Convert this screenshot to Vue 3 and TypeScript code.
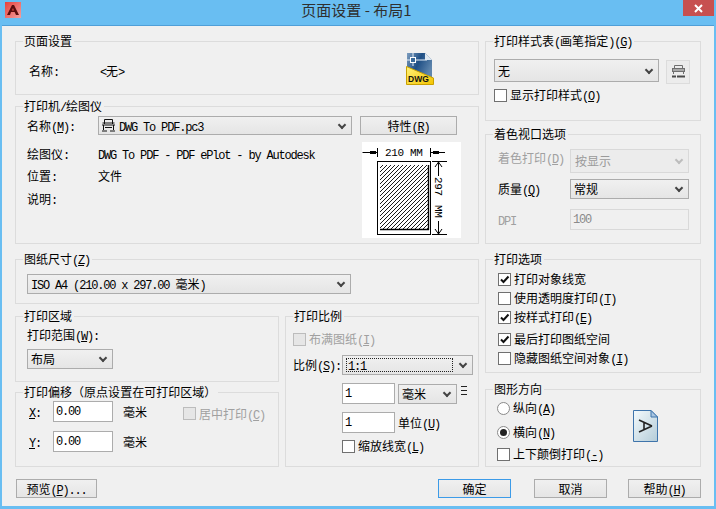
<script setup lang="ts">
import { h } from 'vue'
import type { FunctionalComponent, VNode } from 'vue'

// Renders dialog text: ASCII runs use the narrow font, "&" marks an underlined mnemonic.
const T: FunctionalComponent<{ t: string }> = (props) => {
  const out: (VNode | string)[] = []
  let run: (VNode | string)[] = []
  const flush = () => {
    if (run.length) out.push(h('span', { class: 'm' }, run))
    run = []
  }
  const chars = Array.from(props.t)
  for (let i = 0; i < chars.length; i++) {
    const c = chars[i]
    if (c === '&') {
      i++
      run.push(h('span', { class: 'u' }, chars[i]))
    } else if (c.charCodeAt(0) < 127) {
      run.push(c)
    } else {
      flush()
      out.push(c)
    }
  }
  flush()
  return h('span', { class: 't' }, out)
}
T.props = ['t']
</script>

<template>
  <div class="win">
    <header class="titlebar">
      <svg class="appicon" width="16" height="16" viewBox="0 0 16 16">
        <defs>
          <linearGradient id="appbg" x1="0" y1="0" x2="1" y2="1">
            <stop offset="0" stop-color="#e8403a" />
            <stop offset="1" stop-color="#f2a0a0" />
          </linearGradient>
        </defs>
        <rect width="16" height="16" fill="url(#appbg)" />
        <path d="M2 13 L7 3 H9 L14 13 H11 L9.6 10 H6 L5 13 Z" fill="#5c0d0d" />
        <path d="M6.8 8.5 L8 6 L9 8.5 Z" fill="#d84a44" />
      </svg>
      <span class="title">页面设置 - 布局1</span>
      <button class="close">
        <svg width="9" height="9" viewBox="0 0 9 9"><path d="M1 1 L8 8 M8 1 L1 8" stroke="#fff" stroke-width="2" /></svg>
      </button>
    </header>

    <main class="content">
      <div class="columns">
        <div class="col">
          <section class="group g-page">
            <span class="legend"><T t="页面设置" /></span>
            <div class="row">
              <span class="lab71 nudge"><T t="名称:" /></span>
              <span class="nudge"><T t="<无>" /></span>
              <svg class="dwg" width="28" height="32" viewBox="0 0 28 32">
                <defs>
                  <linearGradient id="dwgblue" x1="0" y1="0" x2="1" y2="0.5">
                    <stop offset="0" stop-color="#7f9fc0" />
                    <stop offset="0.5" stop-color="#1f4f85" />
                    <stop offset="1" stop-color="#5f86ad" />
                  </linearGradient>
                  <linearGradient id="dwgyel" x1="0" y1="0" x2="1" y2="1">
                    <stop offset="0" stop-color="#fff27a" />
                    <stop offset="1" stop-color="#f4c400" />
                  </linearGradient>
                </defs>
                <path d="M1 0 H19 L26 7 V27 H1 Z" fill="url(#dwgblue)" />
                <path d="M19 0 L26 7 H19 Z" fill="#dfe8f0" />
                <path d="M0 7 H21 M7 0 V13" stroke="#e8f0f8" stroke-width="1" />
                <rect x="4.5" y="4.5" width="5" height="5" fill="#3a6a9a" stroke="#fff" />
                <path d="M0.5 13.5 L27.5 25 V31.5 H0.5 Z" fill="url(#dwgyel)" stroke="#c9a000" />
                <text x="2" y="29" class="dwgtext">DWG</text>
              </svg>
            </div>
          </section>

          <section class="group g-printer">
            <span class="legend"><T t="打印机/绘图仪" /></span>
            <div class="row">
              <span class="lab71"><T t="名称(&M):" /></span>
              <div class="sel w254 h19 lead">
                <svg width="13" height="13" viewBox="0 0 13 13" fill="none" stroke="#111">
                  <path d="M2.5 5 V0.5 H10.5 V5" />
                  <path d="M0.5 4 H12.5 M0 6 H13" />
                  <path d="M1.5 6 V11 M11.5 6 V11 M3 8.5 H10 M0 12 H5 M8 12 H13" />
                </svg>
                <T t="DWG To PDF.pc3" />
              </div>
              <button class="btn w97"><T t="特性(&R)" /></button>
            </div>
            <div class="row top plot">
              <div class="info">
                <div class="inforow"><span class="lab71"><T t="绘图仪:" /></span><T t="DWG To PDF - PDF ePlot - by Autodesk" /></div>
                <div class="inforow"><span class="lab71"><T t="位置:" /></span><T t="文件" /></div>
                <div class="inforow extra"><span class="lab71"><T t="说明:" /></span></div>
              </div>
              <svg class="preview" width="99" height="96" viewBox="0 0 99 96">
                <defs>
                  <pattern id="hatch" width="4" height="4" patternUnits="userSpaceOnUse">
                    <path d="M-1 1 L1 -1 M0 4 L4 0 M3 5 L5 3" stroke="#000" stroke-width="0.9" />
                  </pattern>
                </defs>
                <rect width="99" height="96" fill="#fff" />
                <rect x="15.5" y="19.5" width="53" height="73" fill="none" stroke="#000" />
                <rect x="18" y="23" width="48" height="64" fill="url(#hatch)" />
                <path d="M18 87.5 H67 M66.5 23 V88" stroke="#000" stroke-width="1.4" fill="none" />
                <path d="M0.5 10.5 H16 M68 10.5 H83 M15.5 6 V15 M68.5 6 V15" stroke="#000" fill="none" />
                <rect x="8" y="9" width="6" height="3" fill="#000" />
                <rect x="71" y="9" width="6" height="3" fill="#000" />
                <text x="23" y="14" class="dim">210</text>
                <text x="48" y="14" class="dim">MM</text>
                <path d="M70 19.5 H85 M70 92.5 H85 M76.5 20 V34 M76.5 79 V92 M73 25 L76.5 20 L80 25 M73 87 L76.5 92 L80 87" stroke="#000" fill="none" />
                <text transform="translate(73 35) rotate(90)" class="dim">297</text>
                <text transform="translate(73 63) rotate(90)" class="dim">MM</text>
              </svg>
            </div>
          </section>

          <section class="group g-paper">
            <span class="legend"><T t="图纸尺寸(&Z)" /></span>
            <div class="sel w324 h20"><T t="ISO A4 (210.00 x 297.00 毫米)" /></div>
          </section>

          <div class="lower">
            <div class="lowerleft">
              <section class="group g-area">
                <span class="legend"><T t="打印区域" /></span>
                <div><T t="打印范围(&W):" /></div>
                <div class="sel w86 h20 areasel"><T t="布局" /></div>
              </section>
              <section class="group g-offset">
                <span class="legend"><T t="打印偏移（原点设置在可打印区域）" /></span>
                <div class="row offrow">
                  <span class="lab24"><T t="&X:" /></span>
                  <div class="input w60"><T t="0.00" /></div>
                  <span class="unit"><T t="毫米" /></span>
                  <label class="chk dis center">
                    <span class="box disabled"></span><T t="居中打印(&C)" />
                  </label>
                </div>
                <div class="row offrow second">
                  <span class="lab24"><T t="&Y:" /></span>
                  <div class="input w60"><T t="0.00" /></div>
                  <span class="unit"><T t="毫米" /></span>
                </div>
              </section>
            </div>

            <section class="group g-scale">
              <span class="legend"><T t="打印比例" /></span>
              <label class="chk dis"><span class="box disabled"></span><T t="布满图纸(&I)" /></label>
              <div class="row scalerow">
                <span class="lab49"><T t="比例(&S):" /></span>
                <div class="sel w131 h20 focus"><span class="dots"><T t="1:1" /></span></div>
              </div>
              <div class="row indent r8">
                <div class="input w53"><T t="1" /></div>
                <div class="sel w59 h20 ml3"><T t="毫米" /></div>
                <span class="equals"></span>
              </div>
              <div class="row indent r8">
                <div class="input w53"><T t="1" /></div>
                <span class="ml3"><T t="单位(&U)" /></span>
              </div>
              <label class="chk indent r5"><span class="box"></span><T t="缩放线宽(&L)" /></label>
            </section>
          </div>
        </div>

        <div class="col">
          <section class="group g-style">
            <span class="legend"><T t="打印样式表(画笔指定)(&G)" /></span>
            <div class="row top">
              <div class="sel w165 h23"><T t="无" /></div>
              <button class="iconbtn">
                <svg width="13" height="14" viewBox="0 0 13 14" fill="none" stroke="#6f6f6f">
                  <path d="M2.5 4 V0.5 H10.5 V4" />
                  <rect x="0.5" y="3.5" width="12" height="3" fill="#a8a8a8" />
                  <path d="M1.5 6.5 V9 M11.5 6.5 V9" />
                  <path d="M0 11.5 H4 M5 11.5 H13" stroke="#4a4a4a" stroke-width="2" />
                </svg>
              </button>
            </div>
            <label class="chk stylechk"><span class="box"></span><T t="显示打印样式(&O)" /></label>
          </section>

          <section class="group g-shade">
            <span class="legend"><T t="着色视口选项" /></span>
            <div class="row">
              <span class="lab72 dis lift"><T t="着色打印(&D)" /></span>
              <div class="sel w119 h24 seldis"><T t="按显示" /></div>
            </div>
            <div class="row shade2">
              <span class="lab72"><T t="质量(&Q)" /></span>
              <div class="sel w119 h20"><T t="常规" /></div>
            </div>
            <div class="row shade3">
              <span class="lab72 dis"><T t="DPI" /></span>
              <div class="input w119 inputdis"><T t="100" /></div>
            </div>
          </section>

          <section class="group g-options">
            <span class="legend"><T t="打印选项" /></span>
            <label class="chk"><span class="box on"><svg viewBox="0 0 11 11"><path d="M2 5.5 L4.5 8 L9.5 2.5" /></svg></span><T t="打印对象线宽" /></label>
            <label class="chk g3"><span class="box"></span><T t="使用透明度打印(&T)" /></label>
            <label class="chk g3"><span class="box on"><svg viewBox="0 0 11 11"><path d="M2 5.5 L4.5 8 L9.5 2.5" /></svg></span><T t="按样式打印(&E)" /></label>
            <label class="chk g6"><span class="box on"><svg viewBox="0 0 11 11"><path d="M2 5.5 L4.5 8 L9.5 2.5" /></svg></span><T t="最后打印图纸空间" /></label>
            <label class="chk g3"><span class="box"></span><T t="隐藏图纸空间对象(&I)" /></label>
          </section>

          <section class="group g-orient">
            <span class="legend"><T t="图形方向" /></span>
            <div class="orientcol">
              <label class="chk"><span class="radio"></span><T t="纵向(&A)" /></label>
              <label class="chk orient2"><span class="radio sel-on"></span><T t="横向(&N)" /></label>
              <label class="chk orient3"><span class="box"></span><T t="上下颠倒打印(&-)" /></label>
            </div>
            <svg class="paper" width="25" height="32" viewBox="0 0 25 32">
              <defs>
                <linearGradient id="paperbg" x1="0" y1="0" x2="1" y2="1">
                  <stop offset="0" stop-color="#f4fafc" />
                  <stop offset="1" stop-color="#b4ccd8" />
                </linearGradient>
              </defs>
              <path d="M0.5 0.5 H18 L24.5 7 V31.5 H0.5 Z" fill="url(#paperbg)" stroke="#3f74ab" />
              <path d="M18 0.5 V7 H24.5 Z" fill="#a9c6e2" stroke="#3f74ab" />
              <path d="M19 16 L6 10 M19 16 L6 22 M11 12.5 V19.5" stroke="#222" stroke-width="1.6" fill="none" />
            </svg>
          </section>
        </div>
      </div>

      <footer class="buttons">
        <button class="btn w81 preview-btn"><T t="预览(&P)..." /></button>
        <span class="spacer"></span>
        <button class="btn w73 default"><T t="确定" /></button>
        <button class="btn w73 cancel"><T t="取消" /></button>
        <button class="btn w73 help"><T t="帮助(&H)" /></button>
      </footer>
    </main>
  </div>
</template>

<style scoped>
.win {
  width: 716px;
  height: 509px;
  background: #69bef2;
  display: flex;
  flex-direction: column;
  overflow: hidden;
  color: #000;
  font: 12px/16px "Noto Sans CJK SC", "Liberation Sans", sans-serif;
}
.titlebar {
  height: 25px;
  flex: none;
  display: flex;
  justify-content: center;
  position: relative;
}
.appicon {
  position: absolute;
  left: 5px;
  top: 2px;
}
.title {
  font-size: 15px;
  line-height: 20px;
  color: #2f2f2f;
  margin-right: 3px;
}
.close {
  position: absolute;
  right: 2px;
  top: 0;
  width: 31px;
  height: 16px;
  padding: 0;
  border: 0;
  background: #c75050;
  display: flex;
  align-items: center;
  justify-content: center;
}
.content {
  flex: 1;
  margin: 0 2px 3px;
  border-top: 1px solid #4f9fd8;
  background: #f0f0f0;
  padding: 15px 13px 0;
}
.columns {
  display: grid;
  grid-template-columns: 464px 216px;
  column-gap: 6px;
}
.col {
  display: flex;
  flex-direction: column;
}
.group {
  box-sizing: border-box;
  border: 1px solid #dcdcdc;
  position: relative;
  flex: none;
}
.legend {
  position: absolute;
  left: 7px;
  top: -9px;
  padding: 0 2px 0 1px;
  background: #f0f0f0;
  white-space: nowrap;
}
.row {
  display: flex;
  align-items: center;
}
.row.top {
  align-items: flex-start;
}
.lab71 { width: 71px; flex: none; }
.lab72 { width: 72px; flex: none; }
.lab49 { width: 49px; flex: none; }
.lab24 { width: 24px; flex: none; }
.nudge { margin-top: 3px; }
.dis { color: #a0a0a0; }

.g-page { height: 54px; padding: 11px 0 0 13px; }
.dwg { margin-left: auto; margin-right: 44px; }
.dwgtext { font: bold 8.5px "Liberation Sans", sans-serif; fill: #111; }

.g-printer { height: 138px; margin-top: 11px; padding: 9px 0 0 11px; }
.lead { gap: 4px; padding-left: 4px; }
.plot { margin-top: 7px; }
.info { width: 335px; flex: none; padding-top: 1px; }
.inforow { height: 22px; display: flex; align-items: center; white-space: nowrap; }
.inforow.extra { margin-top: 1px; }
.preview { display: block; }
.dim { font: 11px "Liberation Mono", monospace; letter-spacing: -0.4px; fill: #000; }

.g-paper { height: 45px; margin-top: 15px; padding: 14px 0 0 11px; }
.lower {
  display: grid;
  grid-template-columns: 264px 194px;
  column-gap: 6px;
  margin-top: 12px;
}
.lowerleft { display: flex; flex-direction: column; }
.g-area { height: 66px; padding: 10px 0 0 11px; }
.areasel { margin-top: 6px; }
.g-offset { height: 75px; margin-top: 10px; padding: 8px 0 0 13px; }
.offrow { height: 21px; }
.offrow.second { margin-top: 9px; }
.unit { margin-left: 10px; width: 24px; flex: none; }
.center { margin-left: 36px; margin-top: 4px; }

.g-scale { height: 151px; padding: 14px 0 0 7px; }
.scalerow { margin-top: 8px; }
.indent { margin-left: 49px; }
.r8 { margin-top: 8px; }
.r5 { margin-top: 5px; }
.ml3 { margin-left: 3px; }
.equals {
  width: 6px;
  height: 9px;
  margin-left: 4px;
  margin-bottom: 6px;
  border-top: 1px solid #222;
  border-bottom: 1px solid #222;
  background: linear-gradient(#222, #222) center / 100% 1px no-repeat;
  box-sizing: border-box;
}
.dots {
  flex: 1;
  margin: 0 19px 0 0;
  height: 14px;
  line-height: 14px;
  outline: 1px dotted #222;
  outline-offset: -1px;
  padding-left: 2px;
}

.g-style { height: 80px; padding: 17px 0 0 8px; }
.iconbtn {
  width: 24px;
  height: 24px;
  margin: 1px 0 0 7px;
  padding: 0;
  box-sizing: border-box;
  border: 1px solid #dcdcdc;
  background: #ececec;
  display: flex;
  align-items: center;
  justify-content: center;
}
.stylechk { margin-top: 3px; }

.g-shade { height: 110px; margin-top: 13px; padding: 14px 0 0 12px; }
.lift { margin-bottom: 6px; }
.shade2 { margin-top: 6px; }
.shade3 { margin-top: 10px; }

.g-options { height: 114px; margin-top: 15px; padding: 11px 0 0 12px; }
.g3 { margin-top: 3px; }
.g6 { margin-top: 6px; }

.g-orient {
  height: 78px;
  margin-top: 16px;
  padding: 10px 0 0 11px;
  display: flex;
  align-items: flex-start;
}
.orientcol { width: 136px; flex: none; }
.orient2 { margin-top: 8px; }
.orient3 { margin-top: 6px; }
.paper { margin-top: 10px; }

.chk {
  display: flex;
  align-items: center;
  gap: 3px;
  height: 16px;
  white-space: nowrap;
}
.box {
  box-sizing: border-box;
  width: 13px;
  height: 13px;
  flex: none;
  border: 1px solid #707070;
  background: #fff;
  display: flex;
}
.box.disabled {
  border-color: #bcbcbc;
  background: #e6e6e6;
}
.box svg {
  width: 11px;
  height: 11px;
  fill: none;
  stroke: #111;
  stroke-width: 2;
}
.radio {
  box-sizing: border-box;
  width: 13px;
  height: 13px;
  flex: none;
  border: 1px solid #8a8a8a;
  border-radius: 50%;
  background: #fff;
  position: relative;
}
.radio.sel-on::after {
  content: "";
  position: absolute;
  inset: 2px;
  border-radius: 50%;
  background: #222;
}

.sel {
  box-sizing: border-box;
  border: 1px solid #acacac;
  background: linear-gradient(#f0f0f0, #e5e5e5);
  display: flex;
  align-items: center;
  padding-left: 3px;
  position: relative;
  white-space: nowrap;
  flex: none;
}
.sel::after {
  content: "";
  position: absolute;
  right: 6px;
  top: 50%;
  width: 4px;
  height: 4px;
  margin-top: -4px;
  border-right: 2px solid #444;
  border-bottom: 2px solid #444;
  transform: rotate(45deg);
}
.seldis {
  border-color: #d9d9d9;
  background: #ececec;
  color: #9a9a9a;
  padding-left: 4px;
}
.seldis::after { border-color: #bdbdbd; }
.focus { padding-left: 3px; }

.input {
  box-sizing: border-box;
  height: 21px;
  border: 1px solid #acacac;
  background: #fff;
  padding: 0 0 0 2px;
  flex: none;
}
.inputdis {
  border-color: #d9d9d9;
  background: #f0f0f0;
  color: #8a8a8a;
}

.w53 { width: 53px; }
.w59 { width: 59px; }
.w60 { width: 60px; }
.w86 { width: 86px; }
.w119 { width: 119px; }
.w131 { width: 131px; }
.w165 { width: 165px; }
.w254 { width: 254px; }
.w324 { width: 324px; }
.h19 { height: 19px; }
.h20 { height: 20px; }
.h23 { height: 23px; }
.h24 { height: 24px; }

.btn {
  box-sizing: border-box;
  height: 19px;
  padding: 0;
  border: 1px solid #acacac;
  background: linear-gradient(#f0f0f0, #e5e5e5);
  color: #000;
  font: inherit;
  display: flex;
  align-items: center;
  justify-content: center;
  flex: none;
}
.w97 { width: 97px; margin-left: 8px; }
.w81 { width: 81px; }
.w73 { width: 73px; }
.default { border-color: #3c9be8; }
.cancel { margin-left: 23px; }
.help { margin-left: 21px; }
.buttons {
  display: flex;
  margin-top: 12px;
}
.preview-btn { margin-left: 1px; }
.spacer { flex: 1; }
</style>

<style>
html, body { margin: 0; background: #69bef2; }
.t { white-space: pre; }
.m {
  font-family: "Liberation Mono", monospace;
  font-size: 12px;
  line-height: 1;
  letter-spacing: -1.2px;
}
.u { text-decoration: underline; }
</style>
